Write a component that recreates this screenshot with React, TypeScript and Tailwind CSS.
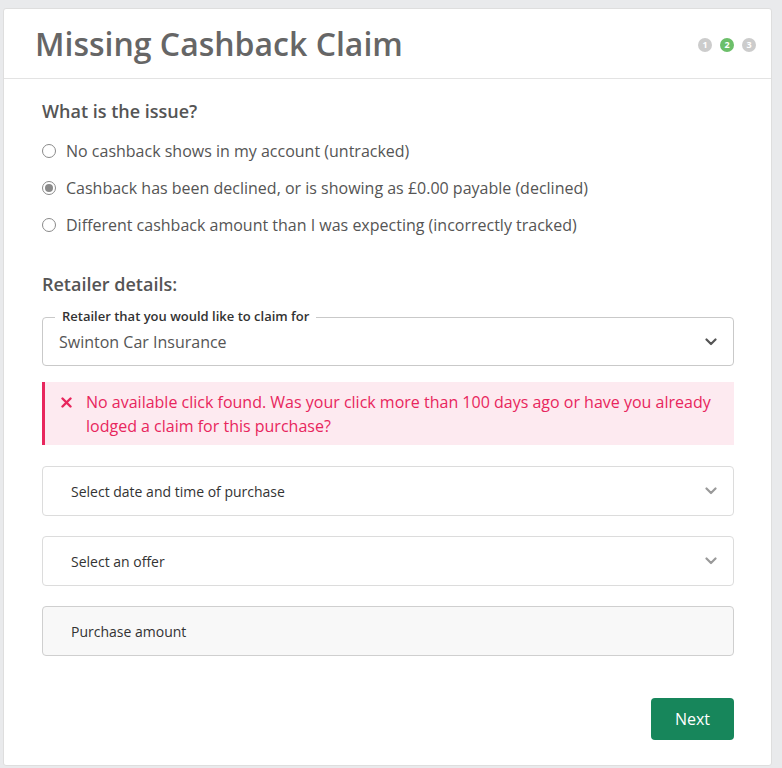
import React from "react";

const font = { fontFamily: '"Open Sans", "Liberation Sans", sans-serif' };

function Chevron({ color }: { color: string }) {
  return (
    <svg width="12" height="8" viewBox="0 0 12 8" fill="none">
      <path d="M1.5 1.5 L6 6 L10.5 1.5" stroke={color} strokeWidth="2.2" strokeLinecap="round" strokeLinejoin="round" />
    </svg>
  );
}

function Radio({ checked, label }: { checked?: boolean; label: string }) {
  return (
    <div className="flex h-[37px] items-center">
      <span className="flex h-[14px] w-[14px] items-center justify-center rounded-full border border-[#8a8a8a] bg-white">
        {checked && <span className="h-[8px] w-[8px] rounded-full bg-[#8a8a8a]" />}
      </span>
      <span className="ml-[10px] text-[16px] text-[#555]">{label}</span>
    </div>
  );
}

function Select({ label }: { label: string }) {
  return (
    <div className="flex h-[50px] items-center justify-between rounded-[4px] border border-[#dcdcdc] bg-white pl-[28px] pr-[16px]">
      <span className="text-[14px] text-[#333]">{label}</span>
      <Chevron color="#9a9a9a" />
    </div>
  );
}

export default function App() {
  return (
    <div className="min-h-[768px] bg-[#e9eaec] pl-[3px] pr-[10px] pt-[8px]" style={font}>
      <div className="w-[769px] rounded-[3px] border border-[#dedede] bg-white">
        <div className="flex h-[70px] items-center justify-between border-b border-[#e3e3e3] pl-[31px] pr-[15px]">
          <h1 className="text-[32px] font-semibold leading-none text-[#666]">Missing Cashback Claim</h1>
          <div className="flex items-center gap-[8px] pt-[2px]">
            <span className="flex h-[14px] w-[14px] items-center justify-center rounded-full bg-[#cccccc] text-[9px] font-bold text-white">1</span>
            <span className="flex h-[14px] w-[14px] items-center justify-center rounded-full bg-[#6cbf6a] text-[9px] font-bold text-white">2</span>
            <span className="flex h-[14px] w-[14px] items-center justify-center rounded-full bg-[#cccccc] text-[9px] font-bold text-white">3</span>
          </div>
        </div>

        <div className="flex flex-col pl-[38px] pr-[37px] pt-[20px] pb-[25px]">
          <h2 className="text-[18px] font-semibold leading-[24px] text-[#555]">What is the issue?</h2>
          <div className="mt-[9px] flex flex-col">
            <Radio label="No cashback shows in my account (untracked)" />
            <Radio checked label="Cashback has been declined, or is showing as £0.00 payable (declined)" />
            <Radio label="Different cashback amount than I was expecting (incorrectly tracked)" />
          </div>

          <h2 className="mt-[29px] text-[18px] font-semibold leading-[24px] text-[#555]">Retailer details:</h2>

          <div className="relative mt-[21px] flex h-[49px] items-center justify-between rounded-[4px] border border-[#c9c9c9] pl-[16px] pr-[16px]">
            <span className="absolute left-[12px] top-[-11px] bg-white px-[7px] text-[13px] font-semibold leading-[18px] text-[#333]">
              Retailer that you would like to claim for
            </span>
            <span className="text-[16px] text-[#555]">Swinton Car Insurance</span>
            <Chevron color="#555" />
          </div>

          <div className="mt-[16px] flex h-[63px] border-l-[3px] border-[#e8265d] bg-[#fdeaf0] pl-[16px] pr-[12px] pt-[8px]">
            <svg width="11" height="11" viewBox="0 0 11 11" className="mt-[7px] shrink-0">
              <path d="M1.5 1.5 L9.5 9.5 M9.5 1.5 L1.5 9.5" stroke="#e8265d" strokeWidth="2.4" strokeLinecap="round" />
            </svg>
            <p className="ml-[14px] text-[16px] leading-[24px] text-[#e8265d]">
              No available click found. Was your click more than 100 days ago or have you already lodged a claim for this purchase?
            </p>
          </div>

          <div className="mt-[21px] flex flex-col gap-[20px]">
            <Select label="Select date and time of purchase" />
            <Select label="Select an offer" />
            <div className="flex h-[50px] items-center rounded-[4px] border border-[#cfcfcf] bg-[#f8f8f8] pl-[28px]">
              <span className="text-[14px] text-[#333]">Purchase amount</span>
            </div>
          </div>

          <div className="mt-[42px] flex justify-end">
            <button className="h-[42px] w-[83px] rounded-[4px] bg-[#17865b] text-[16px] font-medium text-white">Next</button>
          </div>
        </div>
      </div>
    </div>
  );
}
